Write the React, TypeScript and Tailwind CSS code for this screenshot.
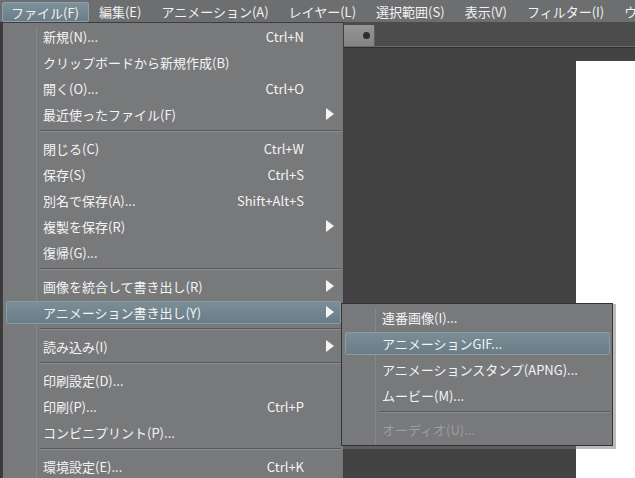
import React from 'react';

type Item =
    | { sep: true }
    | { sep?: false; label: string; shortcut?: string; sub?: boolean; active?: boolean; disabled?: boolean };

const menuBar = [
    { label: 'ファイル(F)', active: true },
    { label: '編集(E)' },
    { label: 'アニメーション(A)' },
    { label: 'レイヤー(L)' },
    { label: '選択範囲(S)' },
    { label: '表示(V)' },
    { label: 'フィルター(I)' },
    { label: 'ウィンドウ(W)' },
];

const fileItems: Item[] = [
    { label: '新規(N)...', shortcut: 'Ctrl+N' },
    { label: 'クリップボードから新規作成(B)' },
    { label: '開く(O)...', shortcut: 'Ctrl+O' },
    { label: '最近使ったファイル(F)', sub: true },
    { sep: true },
    { label: '閉じる(C)', shortcut: 'Ctrl+W' },
    { label: '保存(S)', shortcut: 'Ctrl+S' },
    { label: '別名で保存(A)...', shortcut: 'Shift+Alt+S' },
    { label: '複製を保存(R)', sub: true },
    { label: '復帰(G)...' },
    { sep: true },
    { label: '画像を統合して書き出し(R)', sub: true },
    { label: 'アニメーション書き出し(Y)', sub: true, active: true },
    { sep: true },
    { label: '読み込み(I)', sub: true },
    { sep: true },
    { label: '印刷設定(D)...' },
    { label: '印刷(P)...', shortcut: 'Ctrl+P' },
    { label: 'コンビニプリント(P)...' },
    { sep: true },
    { label: '環境設定(E)...', shortcut: 'Ctrl+K' },
];

const animItems: Item[] = [
    { label: '連番画像(I)...' },
    { label: 'アニメーションGIF...', active: true },
    { label: 'アニメーションスタンプ(APNG)...' },
    { label: 'ムービー(M)...' },
    { sep: true },
    { label: 'オーディオ(U)...', disabled: true },
];

const Arrow = () => (
    <svg width="8" height="12" viewBox="0 0 8 12">
        <path d="M0 0 L8 6 L0 12 Z" fill="#f4f4f4" />
    </svg>
);

const MenuList: React.FC<{ items: Item[]; textLeft: number; lineLeft: number; shortcutRight: number }> = ({ items, textLeft, lineLeft, shortcutRight }) => {
    return (
        <div className="relative flex flex-col pb-[3px]">
            {/* icon column line */}
            <div className="absolute top-[4px] bottom-0 w-px bg-[#87888b]" style={{ left: lineLeft }} />
            {items.map((it, i) =>
                it.sep ? (
                    <div key={i} className="h-[8px] flex flex-col justify-center" style={{ paddingLeft: lineLeft + 4, paddingRight: 2 }}>
                        <div className="h-px bg-[#57585a]" />
                        <div className="h-px bg-[#8d8e91]" />
                    </div>
                ) : (
                    <div key={i} className="relative h-[26px] flex items-center">
                        {it.active && (
                            <div className="absolute left-[3px] right-[2px] top-[2px] bottom-[1px] rounded-[2px] border border-[#8a9ba3] bg-gradient-to-b from-[#7b8e97] to-[#6a7c85]" />
                        )}
                        <span
                            className={`relative whitespace-nowrap text-[13px] leading-none ${it.disabled ? 'text-[#9c9d9f]' : 'text-[#f4f4f4]'}`}
                            style={{ marginLeft: textLeft }}
                        >
                            {it.label}
                        </span>
                        {it.shortcut && (
                            <span className="absolute text-[13px] leading-none text-[#f4f4f4] whitespace-nowrap" style={{ right: shortcutRight }}>
                                {it.shortcut}
                            </span>
                        )}
                        {it.sub && (
                            <span className="absolute right-[9px] top-[7px] flex">
                                <Arrow />
                            </span>
                        )}
                    </div>
                )
            )}
        </div>
    );
};

export default function App() {
    return (
        <div
            className="relative w-[635px] h-[478px] overflow-hidden bg-[#434343] flex flex-col"
            style={{ fontFamily: '"Noto Sans CJK JP", "Noto Sans", sans-serif' }}
        >
            {/* menu bar */}
            <div className="h-[22px] shrink-0 bg-[#6d6e70] flex items-stretch">
                {menuBar.map((m, i) => (
                    <div
                        key={i}
                        className={`flex items-center whitespace-nowrap text-[13px] leading-none text-[#f2f2f2] ${
                            m.active
                                ? 'ml-[2px] mt-[2px] pl-[8px] pr-[9px] rounded-[2px] border border-[#8fa2ab] bg-gradient-to-b from-[#7d919a] to-[#6b7e87]'
                                : 'px-[10px]'
                        }`}
                    >
                        {m.label}
                    </div>
                ))}
            </div>

            {/* workspace */}
            <div className="flex flex-1">
                <div className="w-[2px] bg-[#3a3a3a]" />
                <div className="w-[341px] bg-[#5a5a5c]" />
                <div className="flex-1 flex flex-col">
                    <div className="h-[24px] bg-[#4c4c4c] flex items-end">
                        <div className="w-[32px] h-[21px] bg-gradient-to-b from-[#959595] to-[#848484] border-r border-[#5c5c5c] flex items-center justify-end pr-[4px]">
                            <div className="w-[7px] h-[7px] rounded-full bg-[#2e2e2e]" />
                        </div>
                    </div>
                    <div className="h-px bg-[#6c6c6c]" />
                    <div className="h-px bg-[#2f2f2f]" />
                    <div className="flex-1 flex bg-[#434343] pt-[13px] pl-[233px]">
                        <div className="flex-1 bg-white" />
                    </div>
                </div>
            </div>

            {/* file menu */}
            <div className="absolute left-[2px] top-[22px] w-[342px] h-[470px] bg-[#78797b] border border-[#3e3e40]">
                <MenuList items={fileItems} textLeft={40} lineLeft={33} shortcutRight={39} />
            </div>

            {/* animation export submenu */}
            <div className="absolute left-[341px] top-[303px] w-[272px] bg-[#78797b] border border-[#333335] shadow-[2px_2px_0_1px_rgba(120,120,120,0.5)]">
                <MenuList items={animItems} textLeft={40} lineLeft={33} shortcutRight={20} />
            </div>
        </div>
    );
}
